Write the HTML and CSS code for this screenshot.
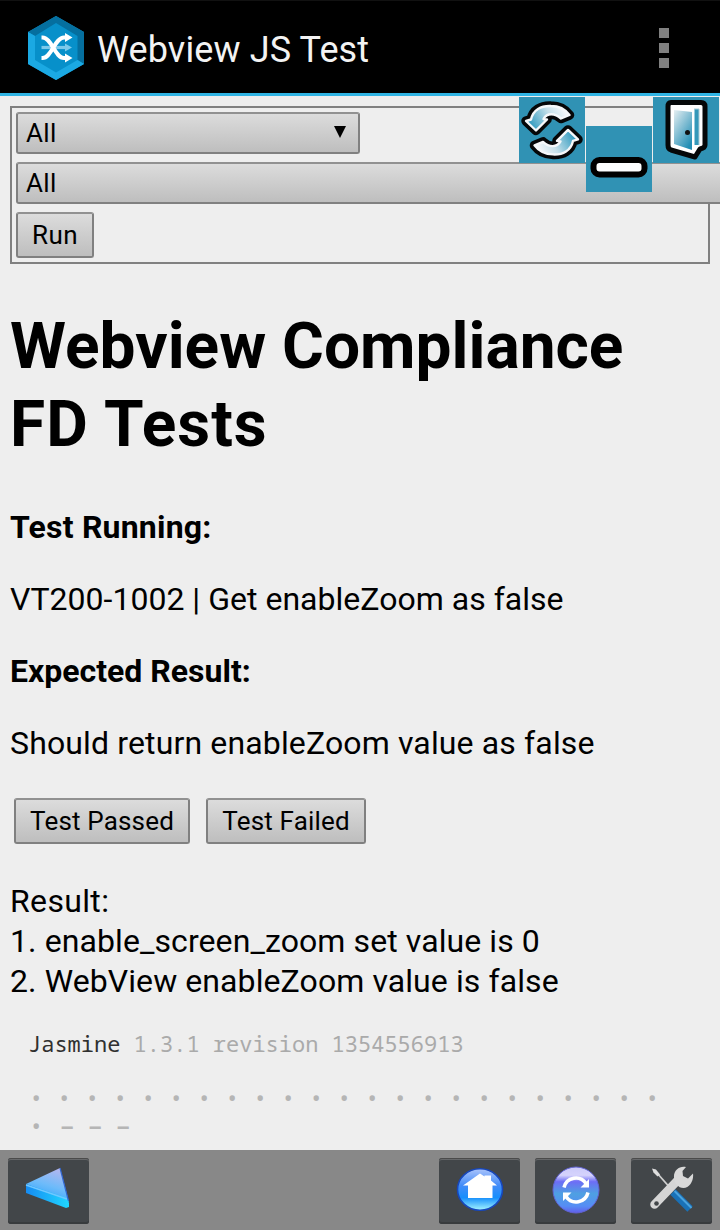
FILE: index.html
```
<!DOCTYPE html>
<html lang="en">
<head>
<meta charset="utf-8">
<title>Webview JS Test</title>
<link rel="stylesheet" href="styles.css">
</head>
<body>
<header class="appbar">
  <svg class="logo" viewBox="0 0 56 64" width="56" height="64">
    <path fill="#0790ca" d="M28 0 56 16V48L28 64 0 48V16z"/>
    <path fill="#056f9f" d="M28 0 56 16V48L49.500 44V20L28 7 7 20 0 16z"/>
    <path fill="#1ba9e3" d="M0 16 7 20V44L28 56.500 49.500 44 56 48 28 64 0 48z"/>
    <path fill="none" stroke="#7cc9ea" stroke-width="3.200" d="M13.500 31.500H37"/>
    <path fill="#7cc9ea" d="m37 27.500 7 4-7 4z"/>
    <path fill="none" stroke="#fff" stroke-width="4" d="M13.500 21.500h1c9 0 12.500 20.500 21.500 20.500h2M13.500 42h1c9 0 12.500-20.500 21.500-20.500h2"/>
    <path fill="#fff" d="m37 17 7.500 4.500L37 26zM37 37.500l7.500 4.500-7.500 4.500z"/>
  </svg>
  <h1 class="title">Webview JS Test</h1>
  <div class="overflow"><i></i><i></i><i></i></div>
</header>
<main class="page">
  <section class="filters">
    <div class="control select short"><span>All</span><svg width="12" height="13" viewBox="0 0 12 13"><path d="M0 0H12L6 12z"/></svg></div>
    <div class="control select long"><span>All</span></div>
    <button class="control">Run</button>
  </section>
  <h2 class="heading">Webview Compliance<br><span class="heading-end">FD Tests</span></h2>
  <p class="line strong running">Test Running:</p>
  <p class="line">VT200-1002 | Get enableZoom as false</p>
  <p class="line strong">Expected Result:</p>
  <p class="line expected">Should return enableZoom value as false</p>
  <div class="actions">
    <button class="control pass">Test Passed</button>
    <button class="control fail">Test Failed</button>
  </div>
  <p class="result"><span class="label">Result:</span><br>1. enable_screen_zoom set value is 0<br>2. WebView enableZoom value is false</p>
  <p class="jasmine"><b>Jasmine</b> 1.3.1 revision 1354556913</p>
  <ul class="symbols">
    <li>•</li><li>•</li><li>•</li><li>•</li><li>•</li><li>•</li><li>•</li><li>•</li><li>•</li><li>•</li><li>•</li><li>•</li><li>•</li><li>•</li><li>•</li><li>•</li><li>•</li><li>•</li><li>•</li><li>•</li><li>•</li><li>•</li><li>•</li><li>•</li><li class="dash">–</li><li class="dash">–</li><li class="dash">–</li>
  </ul>
</main>
<footer class="toolbar">
  <div class="tool back"><svg width="81" height="66" viewBox="0 0 81 66">
    <defs><linearGradient id="tri" x1=".7" y1="0" x2=".3" y2="1"><stop offset="0" stop-color="#b4b7f0"/><stop offset=".5" stop-color="#6dbbfa"/><stop offset="1" stop-color="#27a2fc"/></linearGradient>
    <linearGradient id="edge"><stop offset="0" stop-color="#168cf3"/><stop offset="1" stop-color="#20d7ff"/></linearGradient></defs>
    <path fill="url(#tri)" d="m52 10 9 34L18 26z"/><path fill="url(#edge)" d="m18 26 41 14 2 5v4l-3 1-40-15z"/><path d="m18 27 41 14" stroke="#70c7ff" stroke-width="1.500"/><path d="m52 10 8.500 33" stroke="#3268d1" stroke-width="1.200"/>
  </svg></div>
  <div class="tool"><svg width="81" height="66" viewBox="0 0 81 66">
    <defs><linearGradient id="home" x2="0" y2="1"><stop offset="0" stop-color="#abc4fb"/><stop offset=".4" stop-color="#438cf9"/><stop offset=".7" stop-color="#168ffc"/><stop offset="1" stop-color="#a5f6ff"/></linearGradient></defs>
    <ellipse cx="41" cy="31.500" rx="22.500" ry="20.700" fill="url(#home)" stroke="#1747bb" stroke-width="1.600"/>
    <path fill="#fff" d="m41 15.500 4.500 3V17.500H52V22.500l6 5H53.500V40H29V27.500h-5z"/>
  </svg></div>
  <div class="tool"><svg width="81" height="66" viewBox="0 0 81 66">
    <defs><linearGradient id="ref" x2="0" y2="1"><stop offset="0" stop-color="#cbcafb"/><stop offset=".18" stop-color="#d5d3fc"/><stop offset=".32" stop-color="#6d6df6"/><stop offset=".58" stop-color="#4ea0e2"/><stop offset=".85" stop-color="#568df5"/><stop offset="1" stop-color="#625ce9"/></linearGradient></defs>
    <circle cx="41" cy="32" r="23" fill="url(#ref)" stroke="#6264d5"/>
    <path fill="none" stroke="#fff" stroke-width="3.500" d="M29 29.500a12.200 12.200 0 0 1 22-4M53 34.500a12.200 12.200 0 0 1-22 4"/>
    <path fill="#fff" d="m54 21v8.500h-8.500zM28 43v-8.500h8.500z"/>
  </svg></div>
  <div class="tool"><svg width="81" height="66" viewBox="0 0 81 66">
    <path stroke="#cfcfcf" stroke-width="1.800" d="m26 15 15 17"/><path fill="#dedede" d="m21 10.500 4 1 4 5-2.500 2-4-4z"/>
    <path stroke="#1971b7" stroke-width="7.500" d="m42 34 17 17"/><path stroke="#49a3df" stroke-width="2" d="m43.500 33 17 17"/>
    <path stroke="#d5d5d5" stroke-width="8.500" stroke-linecap="round" d="M23.500 46.500 46 23"/>
    <path fill="#d9d9d9" d="M55 9c-6-1.500-12 3-12 9-.5 6 4 12 9.500 12 6 0 10.500-7 9.500-14.500l-5 5-5-2.500-.5-5z"/>
    <circle cx="25.500" cy="45.500" r="2.300" fill="#424649"/>
  </svg></div>
</footer>
<div class="float refresh"><svg width="66" height="66" viewBox="0 0 66 66">
  <defs><linearGradient id="arr" gradientUnits="userSpaceOnUse" x1="44" y1="12" x2="14" y2="30"><stop offset="0" stop-color="#f2f6f9"/><stop offset=".4" stop-color="#c5e0ea"/><stop offset="1" stop-color="#3b9fc2"/></linearGradient>
  <path id="arrow" d="M12 22.500C14 13 22 8.500 32 9c8 0 14 3 18.500 9L42 21.500C36 16 28 15.500 24.500 22L28 22.500 17 33.500 7 24z"/></defs>
  <g stroke-linejoin="round"><g id="spin"><use href="#arrow" stroke="#050708" stroke-width="9.500"/><use href="#arrow" fill="url(#arr)" stroke="#f5f8fa" stroke-width="2.400"/></g>
  <use href="#spin" transform="rotate(180 33 33.200)"/></g>
</svg></div>
<div class="float minimize"><svg width="66" height="66" viewBox="0 0 66 66"><rect x="7.500" y="34" width="51" height="14.500" rx="6" fill="#fdfeff" stroke="#000" stroke-width="6"/></svg></div>
<div class="float exit"><svg width="66" height="66" viewBox="0 0 66 66">
  <defs><linearGradient id="door" x2=".7" y2="1"><stop offset="0" stop-color="#e6eff2"/><stop offset="1" stop-color="#228eb5"/></linearGradient></defs>
  <path fill="#fff" stroke="#050708" stroke-width="5" stroke-linejoin="round" d="M18 5.500H48q4 0 4 4V48q0 3-5 4l-5 8-24-7q-3-1-3-5V9.500q0-4 3-4z"/>
  <path fill="url(#door)" d="m21 13 18 2v38l-18-6z"/><path fill="#3498ba" d="M41.500 12H46v36h-4.500z"/><path stroke="#a9ccd7" d="M41 12h5v36"/><circle cx="34.500" cy="35.500" r="2.500" fill="#111"/>
</svg></div>
</body>
</html>
```
FILE: styles.css
```
* { box-sizing: border-box; }
html, body { height: 100%; overflow: hidden; }
body { margin: 0; display: flex; flex-direction: column; background: #eee; color: #000; font-family: Roboto, sans-serif; position: relative; white-space: nowrap; }
svg { display: block; fill: none; }
.appbar { height: 96px; flex: none; display: flex; align-items: flex-start; padding: 16px 51px 0 28px; background: #000; border-top: 1px solid #111; border-bottom: 3px solid #30b4e4; }
.logo { margin-top: -1px; }
.title { margin: 11px 0 0 13px; font-size: 36px; line-height: 44px; font-weight: 400; letter-spacing: .12px; color: #f3f3f3; }
.overflow { margin: 11px 0 0 auto; display: grid; gap: 5px; }
.overflow i { width: 10px; height: 10px; background: #808080; }
.page { flex: 1; min-height: 0; padding: 10px; overflow: hidden; }
.filters { height: 158px; border: 2px solid #808080; padding: 4px; display: flex; flex-direction: column; align-items: flex-start; gap: 8px; }
.control { font: 26px/40px Roboto, sans-serif; height: 46px; padding: 0 14px; color: #000; background: linear-gradient(#dcdcdc, #bebebe); border: 2px solid #808080; border-top-color: #919191; border-radius: 3px; flex: none; }
.select { height: 42px; padding: 0 12px 0 8px; line-height: 38px; letter-spacing: .3px; display: flex; justify-content: space-between; }
.select svg { margin-top: 12px; fill: #000; }
.short { width: 344px; }
.long { width: 730px; }
.filters button { width: 78px; letter-spacing: .4px; }
.heading { margin: 44px 0 43px; font-size: 64px; line-height: 78px; font-weight: 700; }
.heading-end { letter-spacing: 1px; }
.line { margin: 0 0 32px; font-size: 32px; line-height: 40px; letter-spacing: .02px; }
.strong { font-weight: 700; letter-spacing: 0; }
.running { letter-spacing: .2px; }
.expected { letter-spacing: .14px; }
.actions { display: flex; gap: 16px; padding-left: 4px; margin-top: 35px; }
.actions .control { letter-spacing: .17px; }
.pass { width: 176px; }
.fail { width: 160px; }
.result { margin: 37px 0 0; font-size: 32px; line-height: 40px; letter-spacing: .09px; }
.label { letter-spacing: .35px; }
.jasmine { margin: 28px 0 0 18px; font: 22px/28px "Noto Sans Mono", "Droid Sans Mono", "DejaVu Sans Mono", monospace; color: #aaa; }
.jasmine b { font-weight: 400; color: #303030; }
.symbols { list-style: none; display: grid; grid-template-columns: repeat(23, 28px); margin: 29px 0 0 22px; padding: 0; font: 700 23px/28px Roboto, sans-serif; color: #b5b5b5; }
.symbols li { height: 28px; }
.symbols .dash { font: 700 22px/30px Roboto, sans-serif; }
.toolbar { flex: none; height: 80px; background: #888; display: flex; gap: 15px; padding: 8px 8px 0; }
.tool { width: 81px; height: 66px; background: #424649; border-radius: 3px; box-shadow: inset 0 1px #4b4b4b, inset 0 2px #66686a, inset 0 -2px #383b3d; }
.back { margin-right: auto; }
.float { position: absolute; width: 66px; height: 66px; background: #3092b4; }
.float svg, .tool svg { filter: blur(.5px); }
.refresh { left: 519px; top: 97px; }
.minimize { left: 586px; top: 126px; }
.exit { left: 653px; top: 97px; }
```
